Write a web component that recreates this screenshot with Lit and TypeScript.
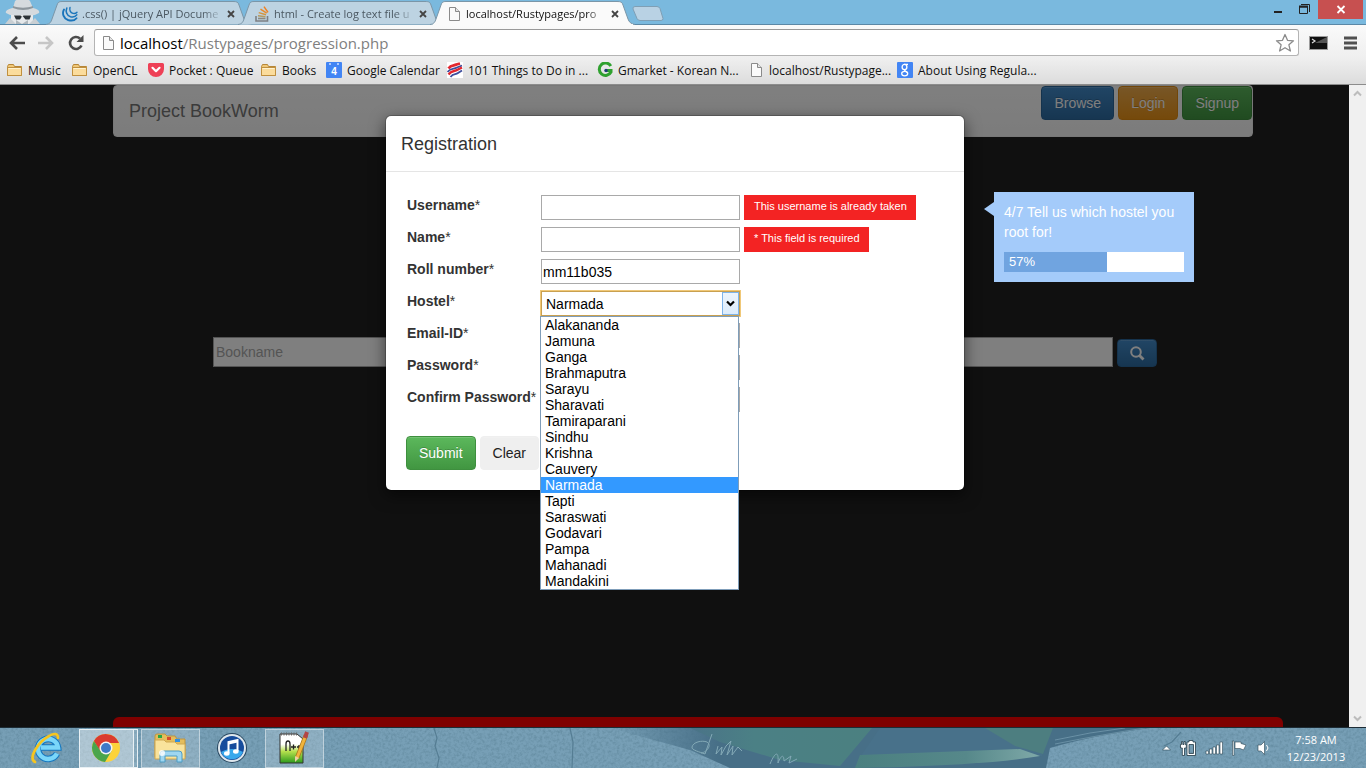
import { LitElement, html, svg, css, nothing } from "lit";
import { customElement, state } from "lit/decorators.js";
import { classMap } from "lit/directives/class-map.js";

const HOSTELS = [
  "Alakananda", "Jamuna", "Ganga", "Brahmaputra", "Sarayu", "Sharavati",
  "Tamiraparani", "Sindhu", "Krishna", "Cauvery", "Narmada", "Tapti",
  "Saraswati", "Godavari", "Pampa", "Mahanadi", "Mandakini",
];

const fileIcon = html`<svg class="i16" viewBox="0 0 16 16">
  <path d="M3.5 1.5h6l4 4v9h-10z" fill="#fafafa" stroke="#8a8a8a" />
  <path d="M9.5 1.5v4h4" fill="#e4e4e4" stroke="#8a8a8a" />
</svg>`;

const folderIcon = html`<svg class="i16" viewBox="0 0 16 16">
  <path d="M.5 4.500l1-2h5l1 2h7v9H.5z" fill="#f0c878" stroke="#b78637" />
  <path d="M.5 5.500h14v8H.5z" fill="#fbdc9c" stroke="#c0903f" />
  <path d="M1.500 6.500h12" stroke="#fff2cf" />
</svg>`;

const jqueryIcon = html`<svg class="i16" viewBox="0 0 16 16" fill="none" stroke="#1b75bb" stroke-linecap="round">
  <path d="M2 3.500C-.2 7.500 1.500 12.500 6 14c3.500 1 7 .2 8.500-1.800" stroke-width="1.900" />
  <path d="M4.800 2C3.300 5.500 4.800 9.500 8.500 10.700c2.800.8 5 0 6.300-1.800" stroke-width="1.600" />
  <path d="M8 1.500C7.200 4 8.300 6.700 11 7.400c1.800.4 3 0 4-1.200" stroke-width="1.400" />
</svg>`;

const stackIcon = html`<svg class="i16" viewBox="0 0 16 16" fill="none">
  <path d="M2 10v5h11.500v-5" stroke="#7d8084" stroke-width="1.600" />
  <path d="M4 12.500h7.500" stroke="#8d8a80" stroke-width="1.600" />
  <path d="M4 9.800l7.500.9" stroke="#b59a62" stroke-width="1.500" />
  <path d="M4.700 6.600l7.300 2.200" stroke="#d5953f" stroke-width="1.500" />
  <path d="M6.500 3.200l6.200 4" stroke="#e88b2b" stroke-width="1.500" />
  <path d="M10 .6l4 5.800" stroke="#f08020" stroke-width="1.500" />
</svg>`;

const pocketIcon = html`<svg class="i16" viewBox="0 0 16 16">
  <path d="M1.500 1h13A1.500 1.500 0 0 1 16 2.500V7a8 8 0 0 1-16 0V2.500A1.500 1.500 0 0 1 1.500 1z" fill="#ee4056" />
  <path d="M4.500 5.800L8 9.200l3.500-3.400" fill="none" stroke="#fff" stroke-width="2.200" stroke-linecap="round" stroke-linejoin="round" />
</svg>`;

const calendarIcon = html`<svg class="i16" viewBox="0 0 16 16">
  <rect width="16" height="16" rx="1" fill="#4285f4" />
  <path d="M3 2h2M11 2h2" stroke="#cfe0ff" stroke-width="1.500" />
  <text x="8" y="13" text-anchor="middle" font-family="Liberation Sans" font-weight="700" font-size="10" fill="#fff">4</text>
</svg>`;

const stripesIcon = html`<svg class="i16" viewBox="0 0 16 16" fill="none">
  <rect width="16" height="16" fill="#fff" />
  <path d="M1.500 6.500C4 2.500 7 4 9.500 2.500L13 1.500" stroke="#e3262e" stroke-width="2.800" />
  <path d="M.5 10C4 5.500 7 7.500 10 5.500L15 3.500" stroke="#3d4d9c" stroke-width="1.800" />
  <path d="M1.500 12.500C5 8 7 10 11 7.500L15 5.500" stroke="#e3262e" stroke-width="2.400" />
  <path d="M3.500 15c3-4 5-2 7.500-4L15 8.500" stroke="#3d4d9c" stroke-width="1.800" />
</svg>`;

const gmarketIcon = html`<svg class="i16" viewBox="0 0 16 16" fill="none">
  <path d="M13.800 4A6.200 6.200 0 1 0 14 10V8.500H9" stroke="#2fa12f" stroke-width="3" />
  <circle cx="9" cy="8.500" r="1.700" fill="#1f3f7a" />
</svg>`;

const googleIcon = html`<svg class="i16" viewBox="0 0 16 16">
  <rect width="16" height="16" rx="1" fill="#4285f4" />
  <g fill="none" stroke="#fff" stroke-width="1.300">
    <ellipse cx="7.500" cy="5" rx="2.400" ry="2.600" />
    <path d="M7 2.400h4M7.500 7.600c-1 1 2.500 1.500 2.800 3.200" />
    <ellipse cx="7.700" cy="11.600" rx="3" ry="2.200" />
  </g>
</svg>`;

const TABS = [
  { title: ".css() | jQuery API Docume", icon: jqueryIcon, active: false },
  { title: "html - Create log text file u", icon: stackIcon, active: false },
  { title: "localhost/Rustypages/pro", icon: fileIcon, active: true },
];

const BOOKMARKS = [
  { label: "Music", icon: folderIcon },
  { label: "OpenCL", icon: folderIcon },
  { label: "Pocket : Queue", icon: pocketIcon },
  { label: "Books", icon: folderIcon },
  { label: "Google Calendar", icon: calendarIcon },
  { label: "101 Things to Do in ...", icon: stripesIcon },
  { label: "Gmarket - Korean N...", icon: gmarketIcon },
  { label: "localhost/Rustypage...", icon: fileIcon },
  { label: "About Using Regula...", icon: googleIcon },
];

const shared = css`
  :host { display: block; box-sizing: border-box; }
  *, *::before, *::after { box-sizing: border-box; }
  button { font: inherit; margin: 0; cursor: pointer; }
  svg { display: block; flex: none; }
  .i16 { width: 16px; height: 16px; }
`;

@customElement("browser-chrome")
class BrowserChrome extends LitElement {
  static styles = [shared, css`
    :host {
      font-family: "Open Sans", "Noto Sans", sans-serif;
      font-size: 12px;
      color: #111;
      border-bottom: 1px solid #8c8c8c;
    }
    .strip {
      display: flex;
      height: 25px;
      background: #7ab9de;
      border-bottom: 1px solid #5b88a6;
    }
    .spy { width: 46px; height: 24px; }
    .tabs { display: flex; font-size: 11px; }
    .tab {
      position: relative;
      display: flex;
      align-items: center;
      gap: 4px;
      width: 206px;
      height: 25px;
      padding: 2px 13px 0 16px;
      margin-right: -14px;
      color: #4b5862;
    }
    .tab.active { color: #111; z-index: 1; }
    .shape { position: absolute; left: 0; top: 0; width: 206px; height: 25px; }
    .tab .i16, .name, .x { position: relative; }
    .name {
      flex: 1;
      white-space: nowrap;
      mask-image: linear-gradient(90deg, #000 88%, rgba(0, 0, 0, 0.2));
    }
    .x { border: 0; background: none; padding: 4px; color: inherit; }
    .plus { border: 0; background: none; padding: 6px 0 0 9px; align-self: flex-start; }
    .controls { display: flex; margin-left: auto; margin-right: 3px; }
    .controls button { border: 0; background: none; padding: 0; height: 19px; }
    .controls .close { background: #c75050; }
    .tools {
      display: flex;
      align-items: center;
      height: 33px;
      padding: 2px 8px 0;
      background: linear-gradient(#fafafa, #efefef);
    }
    .tools button { border: 0; background: none; padding: 0; }
    .nav { display: flex; gap: 11px; width: 86px; }
    .omni {
      flex: 1;
      display: flex;
      align-items: center;
      gap: 4px;
      height: 27px;
      padding: 0 3px 0 5px;
      border: 1px solid #b4b4b4;
      border-top-color: #999;
      border-radius: 3px;
      background: #fff;
      font-size: 15px;
    }
    .url { flex: 1; white-space: nowrap; color: #808080; }
    .url b { font-weight: 400; color: #000; }
    .side { display: flex; align-items: center; gap: 15px; padding-left: 10px; }
    .marks {
      display: grid;
      grid-template-columns: 65px 76px 113px 65px 121px 150px 151px 149px auto;
      align-items: center;
      height: 26px;
      padding: 0 7px 2px;
      background: linear-gradient(#efefef, #dcdcdc);
    }
    .marks a {
      display: flex;
      align-items: center;
      gap: 5px;
      color: #111;
      text-decoration: none;
      white-space: nowrap;
    }
  `];

  render() {
    return html`
      <div class="strip">
        <svg class="spy" viewBox="0 0 46 24">
          <path d="M13 8L15 1c3-3 13-3 15 0l3 7c5 1 7 3 6 5-9 5-24 5-33 0-1-2 2-4 7-5z" fill="#d5dade" />
          <path d="M13 8c6 2.500 14 2.500 20 0v-2c-6 2.300-14 2.300-20 0z" fill="#8d969d" />
          <path d="M11 15h22v9H11z" fill="#e6e9eb" />
          <path d="M14 15.500h6.500l1 1h1l1-1H31l-1.500 4h-4l-2.500-3h-1l-2 3h-4z" fill="#2c3236" />
          <path d="M5 24l5-6 6 6zM29 24l6-6 5 6z" fill="#c9cfd3" />
          <path d="M16 20l6 4 6-4v4H16z" fill="#aeb6bb" />
        </svg>
        <div class="tabs" role="tablist">
          ${TABS.map((t) => html`
            <div class=${classMap({ tab: true, active: t.active })} role="tab">
              <svg class="shape" viewBox="0 0 206 25">
                <path d="M0 24.500C4 24 5 22 6 19L11 5C12 2 13 1.500 16 1.500H187C191 1.500 192 2 193 5L198 19C199 22 201 24 205 24.500"
                  fill=${t.active ? "#fafafa" : "#bdd3e2"} stroke="#7b96a8" />
                ${t.active ? svg`<path d="M3 24.500h200" stroke="#fafafa" />` : nothing}
              </svg>
              ${t.icon}
              <span class="name">${t.title}</span>
              <button class="x" aria-label="Close tab">
                <svg width="8" height="8" viewBox="0 0 8 8"><path d="M1 1l6 6M7 1L1 7" stroke="#444" stroke-width="1.800" /></svg>
              </button>
            </div>`)}
        </div>
        <button class="plus" aria-label="New tab">
          <svg width="34" height="16" viewBox="0 0 34 16">
            <path d="M4 .5h22q2 0 3 2l3 10q0 2-2 2H9q-2 0-3-2L2 3Q1.500.5 4 .5z" fill="#b9d2e4" stroke="#7f9fb5" />
          </svg>
        </button>
        <div class="controls">
          <button aria-label="Minimize"><svg width="26" height="19" viewBox="0 0 26 19"><path d="M8 12h8" stroke="#222" stroke-width="2" /></svg></button>
          <button aria-label="Restore"><svg width="26" height="19" viewBox="0 0 26 19" fill="none" stroke="#222">
            <path d="M7.500 7v6.500h8V7z" /><path d="M7 6.500h9" stroke-width="2" /><path d="M9 4.500h8.500V12" stroke-width="1" /></svg></button>
          <button class="close" aria-label="Close"><svg width="45" height="19" viewBox="0 0 45 19"><path d="M19.500 6l7 7M26.500 6l-7 7" stroke="#fff" stroke-width="1.800" /></svg></button>
        </div>
      </div>
      <div class="tools">
        <div class="nav">
          <button aria-label="Back"><svg width="18" height="18" viewBox="0 0 18 18" fill="none" stroke="#4c4c4c" stroke-width="2.600"><path d="M17 9H4M9 3L3 9l6 6" /></svg></button>
          <button aria-label="Forward"><svg width="18" height="18" viewBox="0 0 18 18" fill="none" stroke="#c6c6c6" stroke-width="2.600"><path d="M1 9h13M9 3l6 6-6 6" /></svg></button>
          <button aria-label="Reload"><svg width="20" height="18" viewBox="0 0 20 18"><path d="M15.500 11.500A6 6 0 1 1 14 4.500" fill="none" stroke="#4c4c4c" stroke-width="2.600" /><path d="M17.500 1v7h-7z" fill="#4c4c4c" /></svg></button>
        </div>
        <div class="omni">
          ${fileIcon}
          <span class="url"><b>localhost</b>/Rustypages/progression.php</span>
          <button aria-label="Bookmark this page">
            <svg width="20" height="20" viewBox="0 0 20 20"><path d="M10 1.500l2.500 5.800 6 .5-4.600 4 1.500 6.200L10 14.700 4.600 18l1.500-6.200-4.600-4 6-.5z" fill="#fff" stroke="#8b8b8b" stroke-width="1.300" stroke-linejoin="round" /></svg>
          </button>
        </div>
        <div class="side">
          <svg width="20" height="16" viewBox="0 0 20 16">
            <rect x=".5" y="1.500" width="18" height="13" fill="#111" stroke="#9c9c9c" />
            <path d="M6 8L18 2v6z" fill="#555" /><path d="M3 4l3 2-3 2" fill="none" stroke="#ddd" stroke-width="1.200" />
          </svg>
          <button aria-label="Menu"><svg width="14" height="14" viewBox="0 0 14 14"><path d="M0 2h13M0 7h13M0 12h13" stroke="#505050" stroke-width="3" /></svg></button>
        </div>
      </div>
      <nav class="marks">
        ${BOOKMARKS.map((b) => html`<a href="#">${b.icon}<span>${b.label}</span></a>`)}
      </nav>`;
  }
}

@customElement("registration-page")
class RegistrationPage extends LitElement {
  @state() private hostel = "Narmada";

  static styles = [shared, css`
    :host {
      position: relative;
      overflow: hidden;
      background: #202020;
      font-family: "Liberation Sans", Arial, sans-serif;
      font-size: 14px;
      line-height: 20px;
      color: #333;
    }
    .container {
      display: flex;
      flex-direction: column;
      width: 1170px;
      max-width: 100%;
      height: 100%;
      margin: 0 auto;
      padding: 0 15px;
    }
    .navbar {
      display: flex;
      align-items: center;
      height: 52px;
      padding-left: 15px;
      border: 1px solid #f0f0f0;
      border-radius: 4px;
      background: linear-gradient(#fff, #f8f8f8);
    }
    .brand { font-size: 18px; color: #777; text-decoration: none; }
    .actions { display: flex; gap: 4px; align-self: flex-start; margin-left: auto; }
    .btn {
      padding: 6px 12px;
      border: 1px solid #3e8f3e;
      border-radius: 4px;
      background: linear-gradient(#5cb85c, #419641);
      box-shadow: inset 0 1px 0 rgba(255, 255, 255, 0.15);
      color: #fff;
      line-height: 20px;
      text-shadow: 0 -1px 0 rgba(0, 0, 0, 0.2);
    }
    .btn.blue { background: linear-gradient(#428bca, #2d6ca2); border-color: #2b669a; }
    .btn.amber { background: linear-gradient(#f0ad4e, #eb9316); border-color: #e38d13; }
    .btn.plain {
      background: #efefef;
      border-color: #efefef;
      color: #222;
      text-shadow: none;
    }
    .search {
      display: flex;
      align-items: flex-end;
      gap: 4px;
      margin-top: 200px;
      padding: 0 96px 0 100px;
    }
    .search input {
      flex: 1;
      min-width: 0;
      height: 30px;
      padding: 2px;
      border: 1px solid #a9a9a9;
      font: inherit;
      background: #fff;
    }
    .search input::placeholder { color: #a9a9a9; }
    .search .btn { width: 40px; height: 28px; padding: 5px 11px; }
    .banner {
      height: 10px;
      margin: auto -30px 0 0;
      border-radius: 6px 6px 0 0;
      background: #f00;
    }
    .backdrop { position: absolute; inset: 0; background: rgba(0, 0, 0, 0.5); }
    .layer { position: absolute; inset: 0 16px 0 0; padding-top: 30px; }
    .dialog {
      position: relative;
      width: 580px;
      max-width: 100%;
      margin: 0 auto;
      border: 1px solid rgba(0, 0, 0, 0.2);
      border-radius: 6px;
      background: #fff;
      background-clip: padding-box;
      box-shadow: 0 5px 15px rgba(0, 0, 0, 0.5);
    }
    .head { padding: 16px 15px 14px; border-bottom: 1px solid #e5e5e5; }
    .head h4 { margin: 0; font-size: 18px; line-height: 25px; font-weight: 400; }
    form { padding: 23px 20px 20px; }
    .fields { display: flex; flex-direction: column; gap: 7px; padding-left: 1px; }
    .row { display: flex; height: 25px; }
    .row label { width: 134px; font-weight: 700; white-space: nowrap; }
    .row label span { font-weight: 400; }
    .row input, .row select {
      width: 199px;
      height: 25px;
      padding: 1px;
      border: 1px solid #a9a9a9;
      border-radius: 0;
      background: #fff;
      color: #000;
      font: inherit;
    }
    .pick { position: relative; width: 199px; height: 25px; }
    .pick select {
      appearance: none;
      padding: 0 4px;
      border-color: #c9a050;
      box-shadow: 0 0 0 1px #f0c878;
      outline: 0;
    }
    .arrow {
      position: absolute;
      right: 1px;
      top: 1px;
      display: grid;
      place-items: center;
      width: 17px;
      height: 23px;
      border: 1px solid #7eb4ea;
      background: linear-gradient(#ecf4fc, #dcecfc);
      pointer-events: none;
    }
    .list {
      position: absolute;
      left: -1px;
      top: 25px;
      z-index: 2;
      width: 199px;
      margin: 0;
      padding: 0;
      border: 1px solid #7f9db9;
      background: #fff;
      color: #000;
      list-style: none;
      line-height: 16px;
    }
    .list li { padding: 0 4px; cursor: default; }
    .list .on { background: #3399ff; color: #fff; }
    .error {
      margin-left: 4px;
      padding: 5px 9px 5px 10px;
      background: #f32323;
      color: #fff;
      font-size: 11px;
      line-height: 13px;
      white-space: nowrap;
    }
    .foot { display: flex; gap: 4px; margin-top: 24px; }
    .tour {
      position: absolute;
      left: 608px;
      top: 76px;
      width: 200px;
      padding: 10px;
      background: #a4cbfa;
      color: #fff;
    }
    .tour::before {
      content: "";
      position: absolute;
      left: -10px;
      top: 10px;
      border: solid transparent;
      border-width: 7px 10px 7px 0;
      border-right-color: #a4cbfa;
    }
    .tour p { margin: 0 0 10px; }
    .meter { background: #fff; }
    .fill { padding-left: 5px; background: #70a4e0; font-size: 13px; }
    .scroll {
      position: absolute;
      inset: 0 0 0 auto;
      display: flex;
      flex-direction: column;
      justify-content: space-between;
      align-items: center;
      width: 17px;
      padding: 5px 0;
      background: #f0f0f0;
    }
  `];

  private field(id: string, label: string, control: unknown, error = "") {
    return html`<div class="row">
      <label for=${id}>${label}<span>*</span></label>
      ${control}
      ${error ? html`<span class="error">${error}</span>` : nothing}
    </div>`;
  }

  render() {
    return html`
      <div class="container">
        <header class="navbar">
          <a class="brand" href="#">Project BookWorm</a>
          <div class="actions">
            <button class="btn blue">Browse</button>
            <button class="btn amber">Login</button>
            <button class="btn">Signup</button>
          </div>
        </header>
        <div class="search">
          <input type="text" placeholder="Bookname" aria-label="Bookname" />
          <button class="btn blue" aria-label="Search">
            <svg width="16" height="16" viewBox="0 0 16 16" fill="none" stroke="#fff"><circle cx="7" cy="7" r="4.800" stroke-width="2" /><path d="M10.500 10.500l4 4" stroke-width="2.800" /></svg>
          </button>
        </div>
        <footer class="banner"></footer>
      </div>
      <div class="backdrop"></div>
      <div class="layer">
        <section class="dialog" role="dialog" aria-label="Registration">
          <div class="head"><h4>Registration</h4></div>
          <form @submit=${(e: Event) => e.preventDefault()}>
            <div class="fields">
              ${this.field("user", "Username", html`<input id="user" type="text" />`, "This username is already taken")}
              ${this.field("name", "Name", html`<input id="name" type="text" />`, "* This field is required")}
              ${this.field("roll", "Roll number", html`<input id="roll" type="text" value="mm11b035" />`)}
              ${this.field("hostel", "Hostel", html`
                <div class="pick">
                  <select id="hostel" @change=${(e: Event) => (this.hostel = (e.target as HTMLSelectElement).value)}>
                    ${HOSTELS.map((h) => html`<option ?selected=${h === this.hostel}>${h}</option>`)}
                  </select>
                  <span class="arrow"><svg width="9" height="7" viewBox="0 0 9 7"><path d="M1 1.500l3.500 3.500L8 1.500" fill="none" stroke="#000" stroke-width="2.200" /></svg></span>
                  <ul class="list" role="listbox" aria-label="Hostel">
                    ${HOSTELS.map((h) => html`<li role="option" class=${classMap({ on: h === this.hostel })}
                      @click=${() => (this.hostel = h)}>${h}</li>`)}
                  </ul>
                </div>`)}
              ${this.field("mail", "Email-ID", html`<input id="mail" type="email" />`)}
              ${this.field("pass", "Password", html`<input id="pass" type="password" />`)}
              ${this.field("again", "Confirm Password", html`<input id="again" type="password" />`)}
            </div>
            <div class="foot">
              <button class="btn" type="submit">Submit</button>
              <button class="btn plain" type="reset">Clear</button>
            </div>
          </form>
          <aside class="tour">
            <p>4/7 Tell us which hostel you root for!</p>
            <div class="meter"><div class="fill" style="width:57%">57%</div></div>
          </aside>
        </section>
      </div>
      <div class="scroll">
        <svg width="9" height="7" viewBox="0 0 9 7"><path d="M1 5.500L4.500 2 8 5.500" fill="none" stroke="#bcbcbc" stroke-width="2" /></svg>
        <svg width="9" height="7" viewBox="0 0 9 7"><path d="M1 1.500L4.500 5 8 1.500" fill="none" stroke="#bcbcbc" stroke-width="2" /></svg>
      </div>`;
  }
}

@customElement("task-bar")
class TaskBar extends LitElement {
  static styles = [shared, css`
    :host {
      position: relative;
      overflow: hidden;
      border-top: 1px solid #1d2c35;
      background: #6f9ab2;
      font-family: "Open Sans", "Noto Sans", sans-serif;
      font-size: 11px;
      line-height: 17px;
      color: #fff;
    }
    .art { position: absolute; inset: 0; width: 100%; height: 40px; }
    .bar { position: relative; display: flex; align-items: center; height: 40px; padding: 0 19px 0 17px; }
    .apps { display: flex; gap: 3px; }
    .apps button {
      display: grid;
      place-items: center;
      width: 59px;
      height: 39px;
      padding: 0 2px 0 0;
      border: 1px solid transparent;
      background: none;
    }
    .apps .open { border-color: rgba(255, 255, 255, 0.45); background: rgba(255, 255, 255, 0.18); }
    .apps .front {
      border-color: #e8f0f4;
      background: linear-gradient(90deg, rgba(255, 255, 255, 0.42) 53px, #e8f0f4 53px, #e8f0f4 54px, rgba(255, 255, 255, 0.15) 54px);
      padding-right: 5px;
    }
    .tray { display: flex; align-items: center; gap: 8px; margin-left: auto; }
    time { display: block; width: 62px; margin-left: 6px; text-align: center; white-space: nowrap; }
  `];

  render() {
    return html`
      <svg class="art" viewBox="0 0 1366 40" preserveAspectRatio="none">
        <defs>
          <filter id="grain" x="0" y="0" width="100%" height="100%">
            <feTurbulence type="fractalNoise" baseFrequency="0.350" numOctaves="3" seed="4" />
            <feColorMatrix values="0 0 0 0 .12  0 0 0 0 .25  0 0 0 0 .34  0 1.600 0 0 -.62" />
          </filter>
          <linearGradient id="shade"><stop stop-color="#476f87" stop-opacity="0" /><stop offset=".2" stop-color="#476f87" /><stop offset="1" stop-color="#476f87" /></linearGradient>
          <linearGradient id="leaf"><stop stop-color="#4a7388" /><stop offset=".35" stop-color="#4b8085" /><stop offset="1" stop-color="#4b8080" /></linearGradient>
          <linearGradient id="tip"><stop stop-color="#4b8080" /><stop offset=".6" stop-color="#56888a" /><stop offset="1" stop-color="#7fa9a8" /></linearGradient>
        </defs>
        <rect width="1366" height="40" fill="#779fb6" />
        <rect width="1366" height="40" filter="url(#grain)" />
        <path d="M434 0l3 10-2 8 4 12-2 10M570 0l3 14-1 26M1181 4l-9 10-8 4" fill="none" stroke="#557d93" stroke-width="1.200" />
        <path d="M610 0H1150Q1090 8 1050 20L1046 40H730L690 22z" fill="url(#shade)" />
        <path d="M690 0H872L840 38 780 32 720 14z" fill="url(#leaf)" />
        <path d="M880 0H1050L1042 28 858 32z" fill="#48718a" />
        <path d="M985 0h68l-10 26-28-8z" fill="#4d7e80" />
        <path d="M860 27l160-6 20 7q-60 10-185 12z" fill="url(#tip)" />
        <path d="M1055 16q50-10 90-16M1055 12q35-8 70-12" fill="none" stroke="#6990a5" />
        <path d="M712 6l-7 20c-5-2-14-4-13-7 1-5 10-7 15-5 6 4-2 11-6 11M718 18l-2 8 6-7-1 8 5-9 5-5-4 14 6-9-1 9 6-8 4 4M770 36c5-12 9-14 8-1 3-8 6-9 6-2l7-5-2 7 8-4" fill="none" stroke="#83a9b6" stroke-width="1" />
      </svg>
      <div class="bar">
        <div class="apps">
          <button aria-label="Internet Explorer"><svg width="32" height="32" viewBox="0 0 32 32" fill="none">
            <path d="M27 21.500a10 10 0 1 1 1-6H11" stroke="#1577c0" stroke-width="6.500" />
            <path d="M27 21.500a10 10 0 1 1 1-6H11" stroke="#7ad6f9" stroke-width="4.500" />
            <path d="M5 30C-2 26 8 10 19 4c5-3 9-3 9 2" stroke="#f6c520" stroke-width="2.600" stroke-linecap="round" />
          </svg></button>
          <button class="front" aria-label="Chrome"><svg width="30" height="30" viewBox="0 0 30 30">
            <circle cx="15" cy="15" r="14" fill="#fcd33a" />
            <path d="M2.900 8A14 14 0 0 1 28 10H15L9 18z" fill="#da3b2f" />
            <path d="M2.900 8A14 14 0 0 0 14 29l6.500-11H9.500z" fill="#4aa54c" />
            <circle cx="15" cy="15" r="6.500" fill="#f4f4f4" /><circle cx="15" cy="15" r="5" fill="#3d79c9" />
          </svg></button>
          <button class="open" aria-label="File Explorer"><svg width="34" height="32" viewBox="0 0 34 32">
            <path d="M2 4q0-2 2-2h8l2 2h8l2 3h8v18H2z" fill="#e4bd5c" stroke="#bd9440" />
            <path d="M5 3h4v3H5z" fill="#28a745" /><path d="M14 5h4v3h-4z" fill="#d9482b" /><path d="M22 7h5v3h-5z" fill="#2f8fe0" />
            <path d="M2 8h9l2 2h9l2 2h8v15H2z" fill="#f9e39c" stroke="#d0a850" />
            <path d="M7 30v-8q0-3 3-3h16q3 0 3 3v8h-5v-6H12v6z" fill="#9ed6f0" stroke="#4d9cc4" />
            <circle cx="9" cy="21" r="3" fill="#fff" opacity=".8" />
          </svg></button>
          <button aria-label="iTunes"><svg width="32" height="32" viewBox="0 0 32 32">
            <circle cx="16" cy="16" r="15" fill="#27465f" /><circle cx="16" cy="16" r="14" fill="#dfe8ee" />
            <circle cx="16" cy="16" r="12" fill="#164c9c" /><path d="M5 20a12 12 0 0 0 22 0c-7-4-15-4-22 0z" fill="#38a8ec" />
            <path d="M12.500 21V10l9-2v11" fill="none" stroke="#fff" stroke-width="2" /><path d="M12.500 11.500l9-2" stroke="#fff" stroke-width="2" />
            <ellipse cx="10.800" cy="21.500" rx="2.800" ry="2.200" fill="#fff" /><ellipse cx="19.800" cy="19.500" rx="2.800" ry="2.200" fill="#fff" />
          </svg></button>
          <button class="open" aria-label="Notepad++"><svg width="32" height="34" viewBox="0 0 32 34">
            <defs><linearGradient id="note" x2="0" y2="1"><stop offset=".35" stop-color="#fff" /><stop offset=".6" stop-color="#b6e04e" /><stop offset="1" stop-color="#2c9a1c" /></linearGradient></defs>
            <path d="M2 3h17l6 5v24H2z" fill="url(#note)" stroke="#333" /><path d="M3 3h17" stroke="#666" stroke-width="3" stroke-dasharray="1 1.500" />
            <path d="M8 20v-7q0-3 2-3t2 3v7M13 16h5M15.500 13.500v5M19 16h4M21 14v4" fill="none" stroke="#222" stroke-width="1.300" />
            <path d="M28 4L19 27" stroke="#a8741c" stroke-width="4.500" /><path d="M28 4L19 27" stroke="#f0b43c" stroke-width="3" />
            <path d="M29 1l-2 6" stroke="#b34545" stroke-width="4" /><path d="M17 25l4 2-4 4z" fill="#e9cfa5" />
          </svg></button>
        </div>
        <div class="tray">
          <svg width="9" height="6" viewBox="0 0 9 6"><path d="M.5 5L4.500 1l4 4z" fill="#fff" stroke="#2d4654" stroke-width=".6" /></svg>
          <svg width="18" height="18" viewBox="0 0 18 18" fill="#fff" stroke="#243b48" stroke-width=".8">
            <path d="M8 3h2V1.500h4V3h2.500v13.500H8zM10 5.500v9h4.500v-9z" fill-rule="evenodd" />
            <path d="M1.500 5.500h1V2.500h1.300v3h1.200v-3h1.300v3h1V9H5.500v7.500H3.300V9H1.500z" />
          </svg>
          <svg width="18" height="16" viewBox="0 0 18 16" fill="#fff" stroke="#2d4654" stroke-width=".6">
            <path d="M1 11h2.500v3H1zM4.500 9H7v5H4.500zM8 7h2.500v7H8zM11.500 5H14v9h-2.500zM15 2h2.500v12H15z" />
          </svg>
          <svg width="16" height="18" viewBox="0 0 16 18" fill="#fff" stroke="#2d4654" stroke-width=".6">
            <path d="M1.500 2H3v14.500H1.500zM4 3h6v1.500L15 6l-2.500 5L9 9.500H4z" />
          </svg>
          <svg width="16" height="16" viewBox="0 0 16 16" fill="#fff">
            <path d="M3 5h3L9.500 1.500v13L6 11H3z" stroke="#2d4654" stroke-width=".6" />
            <path d="M11.500 5q3 3 0 6" fill="none" stroke="#fff" />
          </svg>
          <time datetime="2013-12-23T07:58">7:58 AM<br />12/23/2013</time>
        </div>
      </div>`;
  }
}

@customElement("app-root")
class AppRoot extends LitElement {
  static styles = css`
    :host { display: flex; flex-direction: column; height: 100vh; overflow: hidden; }
    browser-chrome, task-bar { flex: none; }
    registration-page { flex: 1; min-height: 0; }
  `;

  render() {
    return html`<browser-chrome></browser-chrome><registration-page></registration-page><task-bar></task-bar>`;
  }
}
